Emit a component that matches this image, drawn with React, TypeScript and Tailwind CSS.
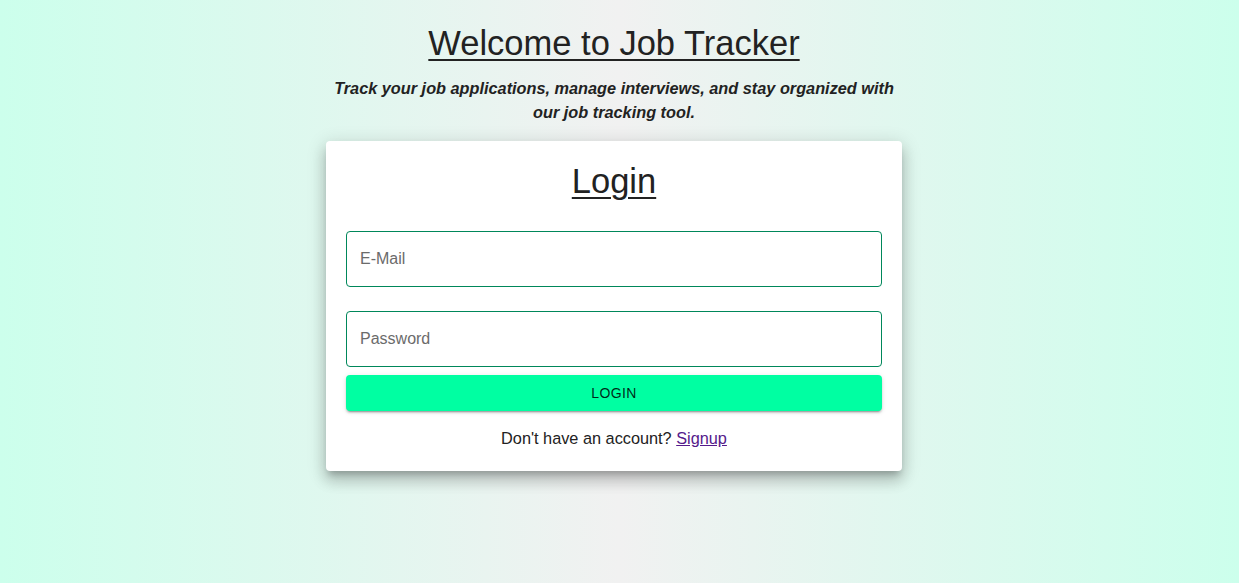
export default function App() {
  return (
    <div className="min-h-screen w-full bg-[linear-gradient(to_right,#ccffec,#f1f1f1,#ccffec)] font-['Liberation_Sans',Arial,sans-serif] text-[#222]">
      <div className="flex flex-col items-center pt-[23px] pr-[11px]">
        <h1 className="text-[34.5px] leading-[40px] underline decoration-[2px] underline-offset-[4px]">
          Welcome to Job Tracker
        </h1>
        <p className="mt-[13px] w-[576px] text-center text-[16.3px] leading-[24px] font-bold italic">
          Track your job applications, manage interviews, and stay organized with our job tracking tool.
        </p>
        <div className="mt-[17px] w-[576px] rounded bg-white px-5 pt-5 pb-[21px] shadow-[0_6px_6px_-3px_rgba(0,0,0,0.2),0_10px_14px_1px_rgba(0,0,0,0.14),0_4px_18px_3px_rgba(0,0,0,0.12)]">
          <h2 className="text-center text-[34.5px] leading-[40px] underline decoration-[2px] underline-offset-[4px]">
            Login
          </h2>
          <form className="flex flex-col" onSubmit={(e) => e.preventDefault()}>
            <input
              type="email"
              placeholder="E-Mail"
              className="mt-[30px] h-14 w-full rounded border border-[#00875a] pl-[13px] pr-[14px] text-base text-[#222] placeholder:text-[#6b6b6b] outline-none"
            />
            <input
              type="password"
              placeholder="Password"
              className="mt-6 h-14 w-full rounded border border-[#00875a] pl-[13px] pr-[14px] text-base text-[#222] placeholder:text-[#6b6b6b] outline-none"
            />
            <button
              type="submit"
              className="mt-[8px] h-[36px] w-full rounded bg-[#00ffa2] text-sm font-medium uppercase tracking-[0.4px] text-black/85 shadow-[0_3px_1px_-2px_rgba(0,0,0,0.2),0_2px_2px_0_rgba(0,0,0,0.14),0_1px_5px_0_rgba(0,0,0,0.12)]"
            >
              Login
            </button>
          </form>
          <p className="mt-[15px] text-center text-[16.3px] leading-6">
            Don't have an account?{" "}
            <a href="#" className="text-[#551a8b] underline">
              Signup
            </a>
          </p>
        </div>
      </div>
    </div>
  );
}
